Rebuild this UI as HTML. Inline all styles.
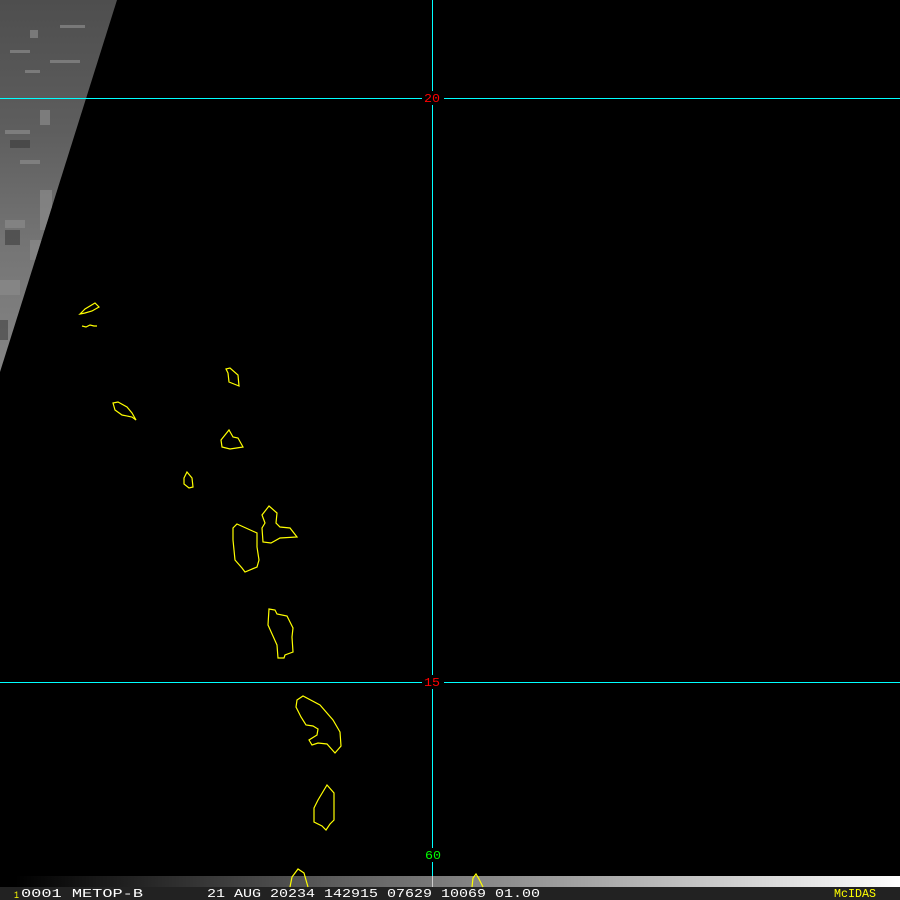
<!DOCTYPE html>
<html><head><style>
html,body{margin:0;padding:0;background:#000;width:900px;height:900px;overflow:hidden}
svg{display:block}
text{font-family:"Liberation Mono","DejaVu Sans Mono",monospace}
</style></head><body>
<svg width="900" height="900" viewBox="0 0 900 900" xmlns="http://www.w3.org/2000/svg">
<defs>
<linearGradient id="sw" x1="0" y1="0" x2="0" y2="1">
<stop offset="0" stop-color="#4e4e4e"/><stop offset="0.35" stop-color="#5e5e5e"/><stop offset="0.65" stop-color="#747474"/><stop offset="1" stop-color="#858585"/>
</linearGradient>
<linearGradient id="bar" x1="0" y1="0" x2="1" y2="0">
<stop offset="0" stop-color="#000"/><stop offset="0.5" stop-color="#808080"/><stop offset="1" stop-color="#fff"/>
</linearGradient>
<clipPath id="cp"><polygon points="0,0 117,0 0,372"/></clipPath>
</defs>
<rect width="900" height="900" fill="#000"/>
<polygon points="0,0 117,0 0,372" fill="url(#sw)"/>
<g clip-path="url(#cp)" fill="#8a8a8a" opacity="0.7">
<rect x="60" y="25" width="25" height="3"/><rect x="30" y="30" width="8" height="8"/><rect x="10" y="50" width="20" height="3"/>
<rect x="50" y="60" width="30" height="3"/><rect x="25" y="70" width="15" height="3"/><rect x="40" y="110" width="10" height="15"/>
<rect x="5" y="130" width="25" height="4"/><rect x="20" y="160" width="20" height="4"/><rect x="40" y="190" width="12" height="40"/>
<rect x="5" y="220" width="20" height="8"/><rect x="30" y="240" width="15" height="20"/><rect x="0" y="280" width="20" height="15"/>
</g>
<g clip-path="url(#cp)" fill="#333" opacity="0.5">
<rect x="5" y="230" width="15" height="15"/><rect x="10" y="140" width="20" height="8"/><rect x="0" y="320" width="8" height="20"/>
</g>
<line x1="0" y1="98.5" x2="900" y2="98.5" stroke="#0ff"/>
<line x1="0" y1="682.5" x2="900" y2="682.5" stroke="#0ff"/>
<line x1="432.5" y1="0" x2="432.5" y2="876" stroke="#0ff"/>
<rect x="15" y="876" width="885" height="11" fill="url(#bar)"/>
<line x1="432.5" y1="876" x2="432.5" y2="887" stroke="#ccc"/>
<rect x="0" y="887" width="900" height="13" fill="#222"/>
<rect x="422" y="91" width="22" height="14" fill="#000"/>
<text x="424" y="102" fill="#f00" font-size="12" textLength="16" lengthAdjust="spacingAndGlyphs">20</text>
<rect x="422" y="675" width="22" height="14" fill="#000"/>
<text x="424" y="686" fill="#f00" font-size="12" textLength="16" lengthAdjust="spacingAndGlyphs">15</text>
<rect x="422" y="848" width="22" height="14" fill="#000"/>
<text x="425" y="859" fill="#0f0" font-size="12" textLength="16" lengthAdjust="spacingAndGlyphs">60</text>
<g fill="none" stroke="#ff0" stroke-width="1.2">
<polygon points="80,314 85,309 95,303 99,307 92,311 85,313"/>
<polyline points="82,326 86,327 90,325 94,326 97,326"/>
<polygon points="226,369 230,368 238,375 239,386 229,382 228,373"/>
<polygon points="113,403 118,402 127,407 132,413 136,420 132,417 122,415 115,410"/>
<polygon points="221,440 229,430 233,437 238,438 243,447 230,449 222,447"/>
<polygon points="187,472 192,478 193,487 189,488 184,484 184,478"/>
<polygon points="237,524 257,533 257,547 259,560 257,567 245,572 242,568 235,560 233,540 233,528"/>
<polygon points="269,506 277,513 276,523 280,527 290,528 297,537 280,538 271,543 263,542 262,528 265,523 262,515"/>
<polygon points="269,609 275,610 277,614 287,616 293,628 292,637 293,652 285,655 284,658 278,658 277,645 268,625"/>
<polygon points="297,700 303,696 320,705 333,720 340,732 341,746 335,753 327,744 318,743 312,745 309,740 317,735 318,729 313,726 306,725 301,717 296,707"/>
<polygon points="327,785 334,793 334,820 330,824 326,830 322,826 314,822 314,808 318,800"/>
<polyline points="290,887 292,877 298,869 304,873 308,887"/>
<polyline points="472,887 473,878 476,874 479,879 483,887"/>
</g>
<text x="14" y="898" fill="#ff0" font-size="10" textLength="5" lengthAdjust="spacingAndGlyphs">1</text>
<text x="21" y="897" fill="#fff" font-size="12" textLength="122" lengthAdjust="spacingAndGlyphs">0001 METOP-B</text>
<text x="207" y="897" fill="#fff" font-size="12" textLength="333" lengthAdjust="spacingAndGlyphs">21 AUG 20234 142915 07629 10069 01.00</text>
<text x="834" y="897" fill="#ff0" font-size="12" textLength="42" lengthAdjust="spacingAndGlyphs">McIDAS</text>
</svg>
</body></html>
